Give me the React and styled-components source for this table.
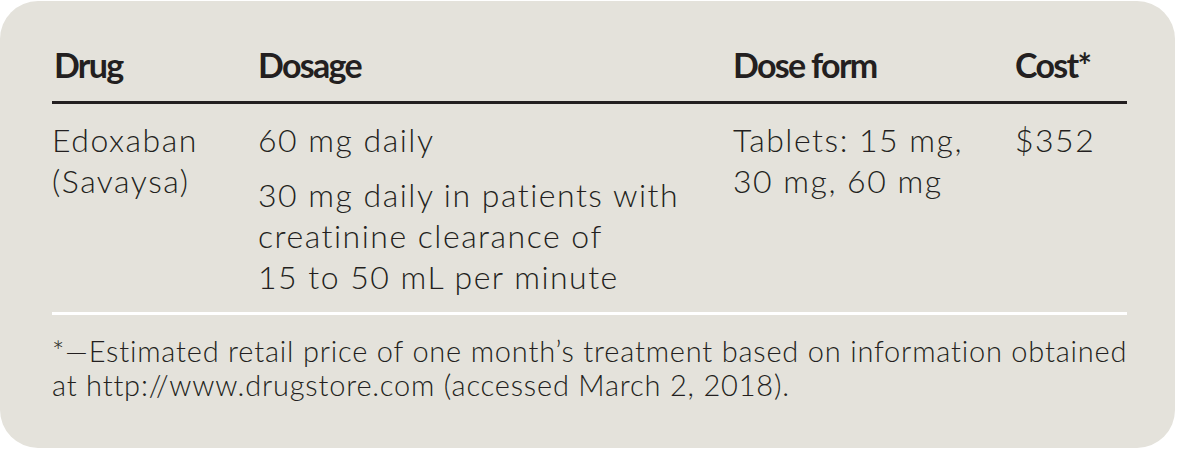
import React from "react";
import styled, { createGlobalStyle } from "styled-components";

const Global = createGlobalStyle`
  html, body { margin: 0; padding: 0; background: #ffffff; }
  body { font-family: Lato, "Open Sans", sans-serif; color: #231f20; }
`;

const Panel = styled.div`
  box-sizing: border-box;
  width: 1175px;
  height: 447px;
  margin-top: 1px;
  background: #e4e2db;
  border-radius: 38px;
  padding: 0 48px 0 52px;
`;

const Row = styled.div`
  display: grid;
  grid-template-columns: 206px 475px 282px 1fr;
`;

const HeadRow = styled(Row)`
  padding: 43px 0 16px;
  border-bottom: 3px solid #231f20;
`;

const HeadCell = styled.div`
  font-weight: 700;
  font-size: 34px;
  line-height: 41px;
  letter-spacing: -1.7px;
  padding-left: ${(p) => (p.$first ? "2px" : "0")};
`;

const BodyRow = styled(Row)`
  padding: 15px 0 15px;
  border-bottom: 3px solid #ffffff;
`;

const Cell = styled.div`
  font-weight: 300;
  font-size: 32px;
  line-height: 41px;
  letter-spacing: 1.5px;
`;

const Para = styled.p`
  margin: 0;
  & + & {
    margin-top: 14px;
  }
`;

const Footnote = styled.p`
  margin: 19px 0 0;
  font-weight: 300;
  font-size: 29px;
  line-height: 34px;
  letter-spacing: 0.8px;
  white-space: nowrap;
`;

export default function App() {
  return (
    <>
      <Global />
      <Panel>
        <HeadRow>
          <HeadCell $first>Drug</HeadCell>
          <HeadCell>Dosage</HeadCell>
          <HeadCell>Dose form</HeadCell>
          <HeadCell>Cost*</HeadCell>
        </HeadRow>
        <BodyRow>
          <Cell>
            Edoxaban
            <br />
            (Savaysa)
          </Cell>
          <Cell>
            <Para>60 mg daily</Para>
            <Para>
              30 mg daily in patients with
              <br />
              creatinine clearance of
              <br />
              15 to 50 mL per minute
            </Para>
          </Cell>
          <Cell>
            Tablets: 15 mg,
            <br />
            30 mg, 60 mg
          </Cell>
          <Cell>$352</Cell>
        </BodyRow>
        <Footnote>
          *—Estimated retail price of one month’s treatment based on information obtained
          <br />
          at http://www.drugstore.com (accessed March 2, 2018).
        </Footnote>
      </Panel>
    </>
  );
}
